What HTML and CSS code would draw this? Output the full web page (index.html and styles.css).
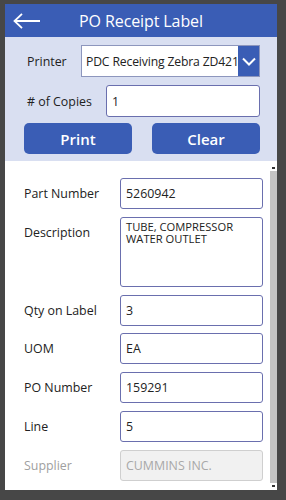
FILE: index.html
```html
<!DOCTYPE html>
<html lang="en">
<head>
    <meta charset="UTF-8">
    <meta name="viewport" content="width=device-width, initial-scale=1.0">
    <title>PO Receipt Label</title>
    <link rel="stylesheet" href="styles.css">
</head>
<body>
    <div class="frame">
        <div class="header">
            <svg class="back" width="28" height="16" viewBox="0 0 28 16">
                <path d="M1.5 8 H27 M9 0.8 L1.5 8 L9 15.2" fill="none" stroke="#fff" stroke-width="1.8"/>
            </svg>
            <h1>PO Receipt Label</h1>
        </div>

        <div class="print-panel">
            <div class="panel-row">
                <span class="panel-label">Printer</span>
                <div class="dropdown">
                    <span class="dropdown-text">PDC Receiving Zebra ZD421</span>
                    <span class="dropdown-btn">
                        <svg width="14" height="9" viewBox="0 0 14 9">
                            <path d="M1 1.5 L7 7.5 L13 1.5" fill="none" stroke="#fff" stroke-width="2"/>
                        </svg>
                    </span>
                </div>
            </div>
            <div class="panel-row">
                <span class="panel-label copies-label"># of Copies</span>
                <div class="field copies">1</div>
            </div>
            <div class="button-row">
                <button class="btn">Print</button>
                <button class="btn">Clear</button>
            </div>
        </div>

        <div class="form-area">
            <div class="form">
                <div class="form-row">
                    <span class="form-label">Part Number</span>
                    <div class="field">5260942</div>
                </div>
                <div class="form-row">
                    <span class="form-label">Description</span>
                    <div class="field multiline">TUBE, COMPRESSOR<br>WATER OUTLET</div>
                </div>
                <div class="form-row">
                    <span class="form-label">Qty on Label</span>
                    <div class="field">3</div>
                </div>
                <div class="form-row">
                    <span class="form-label">UOM</span>
                    <div class="field">EA</div>
                </div>
                <div class="form-row">
                    <span class="form-label">PO Number</span>
                    <div class="field">159291</div>
                </div>
                <div class="form-row">
                    <span class="form-label">Line</span>
                    <div class="field">5</div>
                </div>
                <div class="form-row disabled">
                    <span class="form-label">Supplier</span>
                    <div class="field">CUMMINS INC.</div>
                </div>
            </div>
            <div class="scrollbar">
                <span class="scroll-arrow up"></span>
                <span class="scroll-track"></span>
                <span class="scroll-arrow down"></span>
            </div>
        </div>
    </div>
</body>
</html>
```

FILE: styles.css
```css
body {
    margin: 0;
    background-color: #474747;
    font-family: 'Open Sans', 'Noto Sans', Arial, sans-serif;
    color: #222;
}
.frame {
    margin: 4px 9px 0 5px;
    height: 486px;
    display: flex;
    flex-direction: column;
    background-color: white;
}
.header {
    height: 33px;
    background-color: #3a5db5;
    display: flex;
    align-items: center;
    position: relative;
}
.back {
    position: absolute;
    left: 8px;
    top: 9px;
}
h1 {
    margin: 0;
    width: 100%;
    text-align: center;
    color: white;
    font-weight: normal;
    font-size: 16px;
    letter-spacing: -0.1px;
}
.print-panel {
    background-color: #d9dff1;
    padding: 8px 17px 7px 19px;
    display: flex;
    flex-direction: column;
    gap: 8px;
}
.panel-row {
    display: flex;
    align-items: center;
    height: 32px;
}
.panel-label {
    box-sizing: border-box;
    width: 57px;
    padding-left: 3px;
    font-size: 12.4px;
}
.copies-label {
    width: 82px;
}
.dropdown {
    flex: 1;
    height: 32px;
    box-sizing: border-box;
    border: 1px solid #8d96bd;
    background-color: white;
    display: flex;
    align-items: center;
    overflow: hidden;
}
.dropdown-text {
    flex: 1;
    padding-left: 4px;
    font-size: 12.2px;
    letter-spacing: -0.15px;
    white-space: nowrap;
    overflow: hidden;
}
.dropdown-btn {
    width: 21px;
    height: 100%;
    background-color: #3a5db5;
    display: flex;
    align-items: center;
    justify-content: center;
}
.field {
    flex: 1;
    box-sizing: border-box;
    height: 31px;
    padding: 6px 5px;
    border: 1px solid #6a6fae;
    border-radius: 3px;
    background-color: white;
    font-size: 12.4px;
    line-height: 17px;
}
.copies {
    height: 32px;
    padding-top: 7px;
}
.button-row {
    display: flex;
    gap: 20px;
    margin-top: -2px;
}
.btn {
    flex: 1;
    height: 31px;
    border: none;
    border-radius: 5px;
    background-color: #3a5db5;
    color: white;
    font-family: 'Open Sans', 'Noto Sans', Arial, sans-serif;
    font-size: 15px;
    font-weight: 600;
}
.form-area {
    flex: 1;
    display: flex;
}
.form {
    flex: 1;
    padding: 17px 7px 0 19px;
    display: flex;
    flex-direction: column;
    gap: 7.8px;
}
.form-row {
    display: flex;
    align-items: flex-start;
}
.form-label {
    width: 96px;
    padding-top: 7px;
    font-size: 12.4px;
    line-height: 17px;
}
.multiline {
    height: 70px;
    padding-top: 3px;
    font-size: 11.2px;
    line-height: 12.5px;
}
.disabled .form-label {
    color: #a0a0a0;
}
.disabled .field {
    background-color: #f1f1f1;
    border-color: #cfcfcf;
    color: #a8a8a8;
}
.scrollbar {
    width: 7px;
    margin: 4px 0 1px;
    display: flex;
    flex-direction: column;
}
.scroll-arrow {
    height: 6px;
    position: relative;
}
.scroll-arrow::after {
    content: '';
    position: absolute;
    left: 2px;
    top: 2px;
    width: 3px;
    height: 2px;
    background-color: #333;
}
.scroll-track {
    flex: 1;
    background-color: #c4c4c4;
}
```
